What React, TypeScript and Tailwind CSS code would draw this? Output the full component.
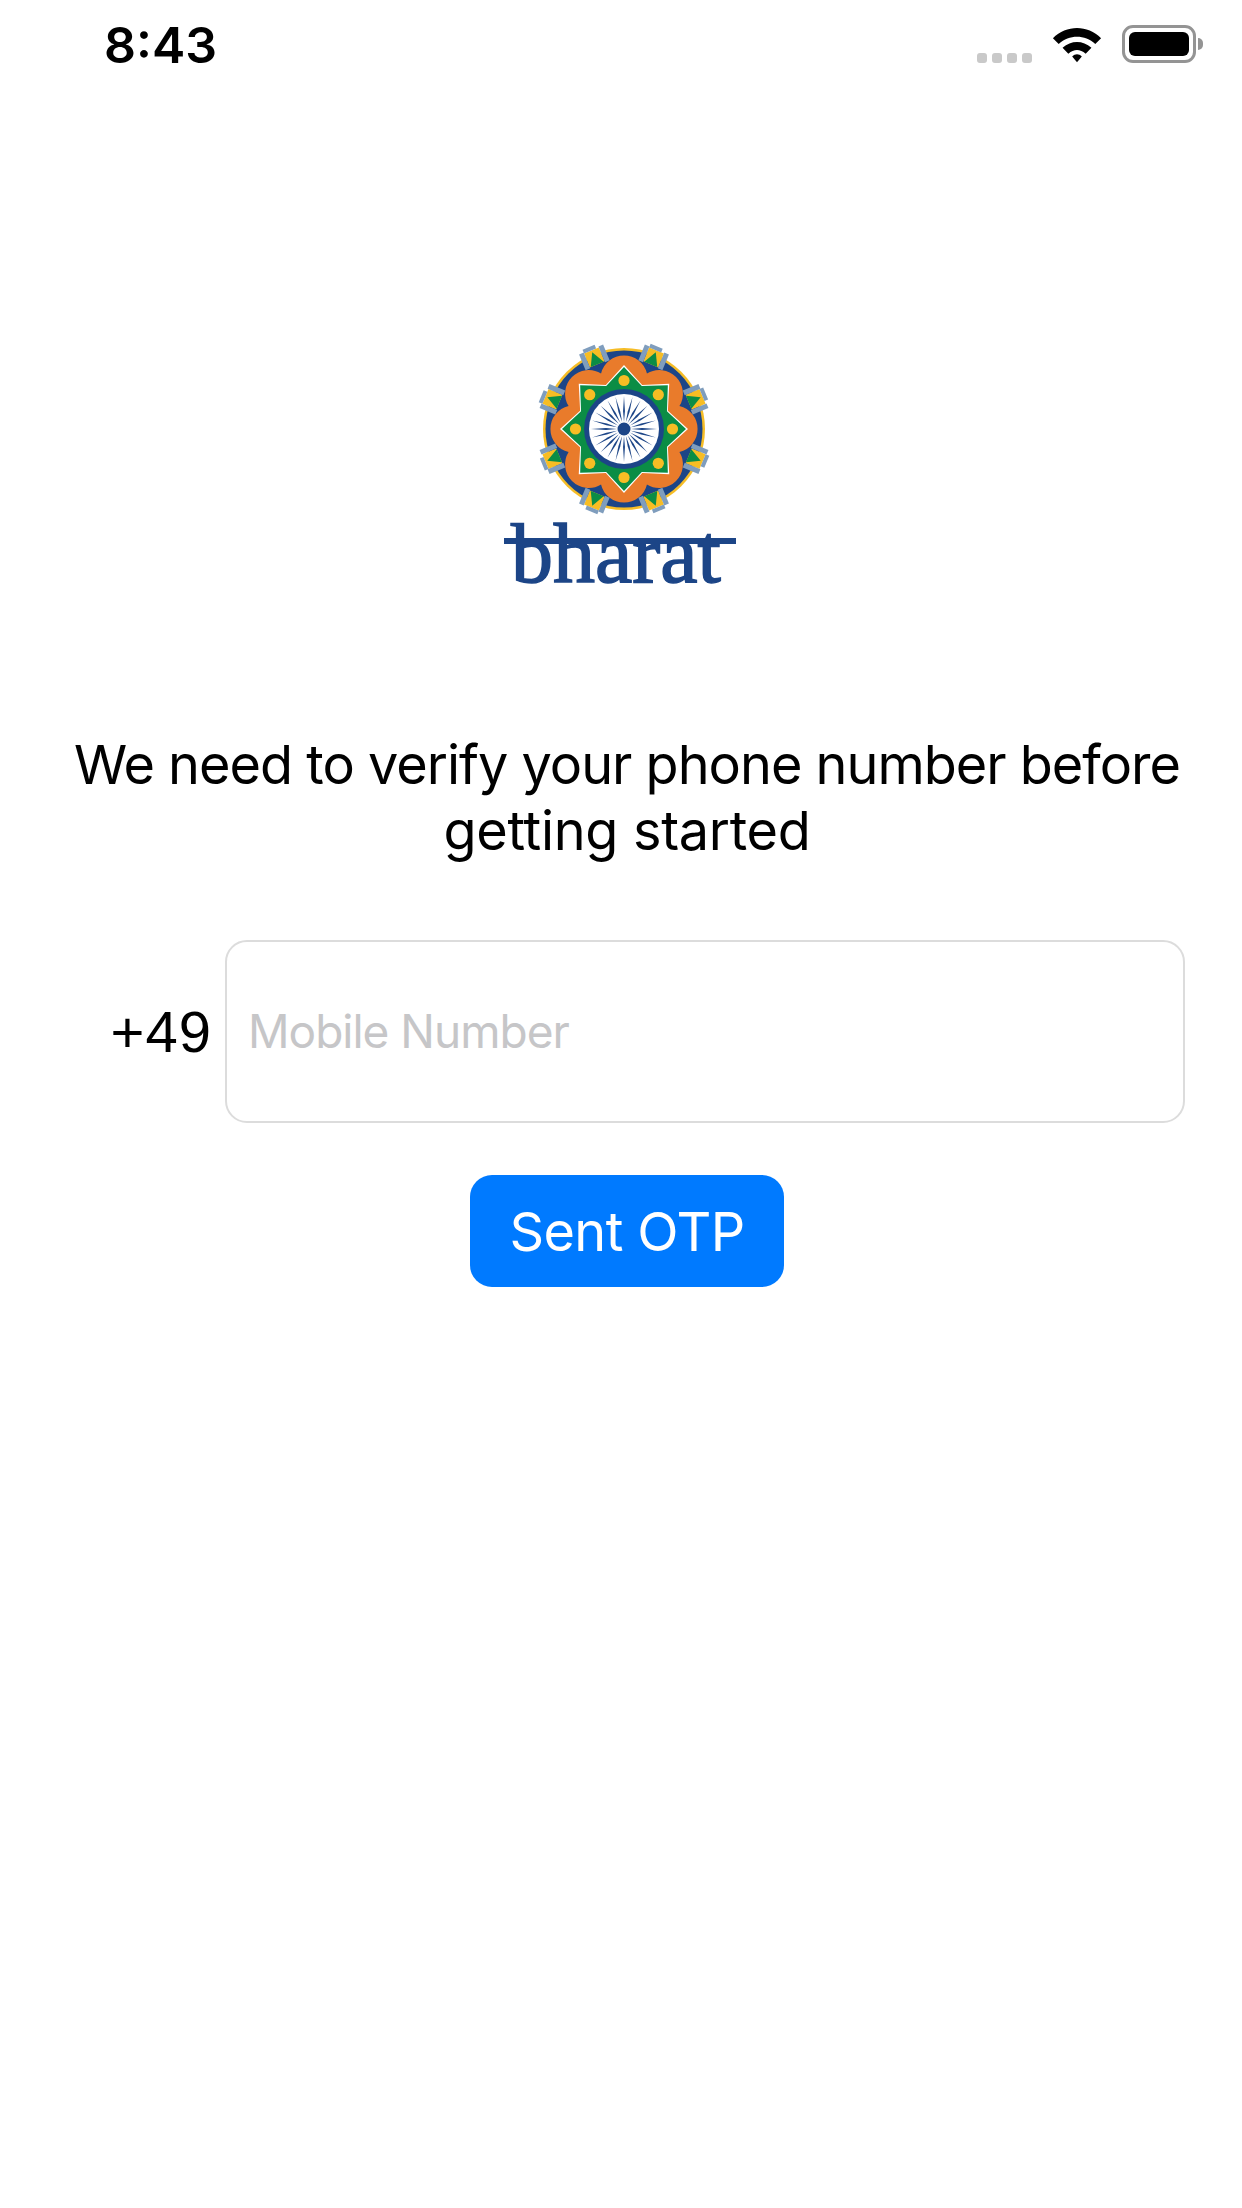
import { type FC } from "react";

const BLUE = "#1c4587";
const SANS = "font-['Inter','Liberation_Sans',sans-serif]";

const polar = (r: number, deg: number): string => {
  const a = ((deg - 90) * Math.PI) / 180;
  return `${(r * Math.cos(a)).toFixed(2)} ${(r * Math.sin(a)).toFixed(2)}`;
};

const range = (n: number): number[] => Array.from({ length: n }, (_, i) => i);

// flower outline: one arc per lobe, cusps sit between the lobes
const lobes = (): string => {
  const pts = range(8).map((i) => polar(60, 22.5 + i * 45));
  return `M${pts[7]} ${pts.map((p) => `A23.6 23.6 0 0 1 ${p}`).join(" ")}Z`;
};

const star = (outer: number, inner: number): string =>
  `M${range(16)
    .map((i) => polar(i % 2 ? inner : outer, i * 22.5))
    .join("L")}Z`;

const Logo: FC = () => (
  <svg viewBox="-90 -90 180 180" className="w-[180px] h-[180px]">
    <circle r="81" fill="#f6bd27" />
    <circle r="78.5" fill={BLUE} />
    <path d={lobes()} fill="#e97b2b" />
    <path d={star(64, 47.5)} fill="#fff" />
    <path d={star(62, 46.5)} fill="#0b8d45" />
    {range(8).map((i) => (
      <circle
        key={i}
        cx={48.5 * Math.sin((i * Math.PI) / 4)}
        cy={-48.5 * Math.cos((i * Math.PI) / 4)}
        r="5.6"
        fill="#f7bd24"
      />
    ))}
    <circle r="40" fill={BLUE} />
    <circle r="35" fill="#fff" />
    {range(24).map((i) => (
      <path
        key={i}
        d={`M${polar(7, i * 15)}L${polar(18, i * 15 - 3)}L${polar(33, i * 15)}L${polar(18, i * 15 + 3)}Z`}
        fill={BLUE}
      />
    ))}
    <circle r="6.5" fill={BLUE} />
    {range(8).map((i) => (
      <g key={i} transform={`rotate(${22.5 + i * 45}) translate(0 -78)`}>
        <rect x="-8" y="-7" width="16" height="15" fill="#f7bd24" />
        <path d="M-7 8L7 8L0 -5Z" fill="#0b8d45" />
        <rect x="-13" y="-8" width="5" height="17" fill="#7f9dbd" />
        <rect x="8" y="-8" width="5" height="17" fill="#7f9dbd" />
        <rect x="-8" y="-11" width="13" height="4" fill="#7f9dbd" />
      </g>
    ))}
  </svg>
);

const StatusBar: FC = () => (
  <div className="h-[88px] flex items-center justify-between pl-[104px] pr-[39px]">
    <span className={`${SANS} mt-[2px] text-[50px] font-semibold text-black leading-none`}>8:43</span>
    <div className="flex items-center">
      <div className="flex gap-[5px] mt-[28px] mr-[19px]">
        {range(4).map((i) => (
          <div key={i} className="w-[10px] h-[10px] rounded-[3px] bg-[#c9c9c9]" />
        ))}
      </div>
      <svg viewBox="0 0 54 38" className="w-[52px] h-[38px] mr-[19px]">
        <path d="M2 13 C16 -1 38 -1 52 13 L46 19 C35 9 19 9 8 19Z" fill="#000" />
        <path d="M12 23 C21 15 33 15 42 23 L36 29 C30 24 24 24 18 29Z" fill="#000" />
        <path d="M22 32 C25 29 29 29 32 32 L27 38Z" fill="#000" />
      </svg>
      <div className="w-[74px] h-[38px] rounded-[11px] border-[3px] border-[#949494] p-[4px]">
        <div className="w-full h-full rounded-[6px] bg-black" />
      </div>
      <div className="w-[5px] h-[12px] rounded-r-full bg-[#949494] ml-[2px]" />
    </div>
  </div>
);

export default function App() {
  return (
    <div className={`${SANS} w-[1242px] h-[2208px] bg-white flex flex-col`}>
      <StatusBar />
      <div className="flex flex-col items-center mt-[251px] pl-[6px]">
        <Logo />
        <div className="relative w-[240px] h-[72px] mt-[-1px] pl-[7px]">
          <div className="absolute top-[20px] left-0 w-[232px] h-[6px] bg-[#1c4587]" />
          <span className="font-['Liberation_Serif',serif] text-[84px] leading-[72px] text-[#1c4587] [-webkit-text-stroke:1.5px_#1c4587]">
            bharat
          </span>
        </div>
      </div>
      <p className="mt-[142px] pl-[12px] text-center text-[54px] leading-[66px] text-black tracking-[-1px]">
        We need to verify your phone number before
        <br />
        <span className="tracking-[-0.3px]">getting started</span>
      </p>
      <div className="flex items-center mt-[76px]">
        <span className="w-[212px] mr-[13px] text-right font-['Liberation_Sans',sans-serif] text-[58px] leading-none text-black tracking-[1px]">
          +49
        </span>
        <div className="w-[960px] h-[183px] rounded-[22px] border-2 border-[#dcdcdc] flex items-center px-[21px]">
          <span className="text-[46px] text-[#c6c6c8] tracking-[-1px]">Mobile Number</span>
        </div>
      </div>
      <button className="self-start ml-[470px] mt-[52px] w-[314px] h-[112px] rounded-[22px] bg-[#007aff] text-white text-[54px] tracking-[-0.6px]">
        Sent OTP
      </button>
    </div>
  );
}
